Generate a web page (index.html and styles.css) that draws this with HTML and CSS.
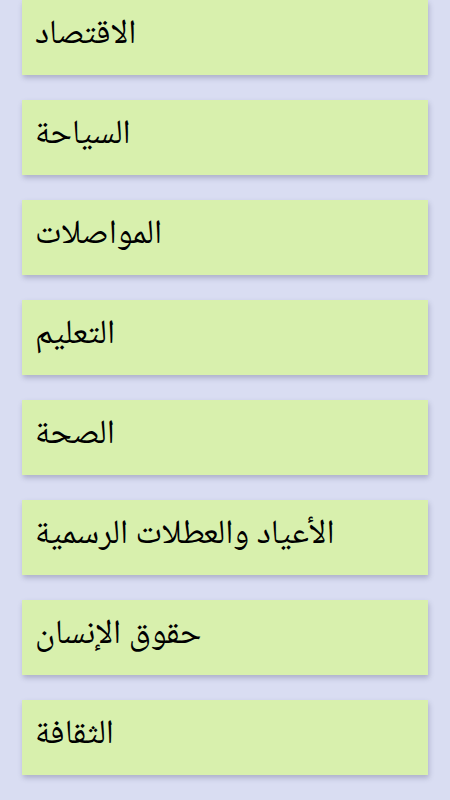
FILE: index.html
```html
<!DOCTYPE html>
<html lang="ar">
<head>
  <meta charset="UTF-8" />
  <meta name="viewport" content="width=device-width, initial-scale=1.0"/>
  <title>الأقسام</title>
  <link rel="stylesheet" href="styles.css">
</head>
<body>
  <main class="topics">
    <a href="#" class="topic">الاقتصاد</a>
    <a href="#" class="topic">السياحة</a>
    <a href="#" class="topic">المواصلات</a>
    <a href="#" class="topic">التعليم</a>
    <a href="#" class="topic">الصحة</a>
    <a href="#" class="topic">الأعياد والعطلات الرسمية</a>
    <a href="#" class="topic">حقوق الإنسان</a>
    <a href="#" class="topic">الثقافة</a>
  </main>
</body>
</html>
```

FILE: styles.css
```css
* {
  margin: 0;
  padding: 0;
  box-sizing: border-box;
}

body {
  font-family: "Noto Naskh Arabic", "DejaVu Sans", sans-serif;
  background: #d9ddf2;
  color: #000;
}

.topics {
  display: flex;
  flex-direction: column;
  gap: 25px;
  padding: 0 22px 25px;
}

.topic {
  display: flex;
  align-items: center;
  height: 75px;
  padding: 0 13px 3px;
  background: #d8f0ad;
  color: #000;
  font-size: 34px;
  text-decoration: none;
  direction: ltr;
  box-shadow: 1px 3px 5px rgba(60, 60, 100, 0.28);
}
```
